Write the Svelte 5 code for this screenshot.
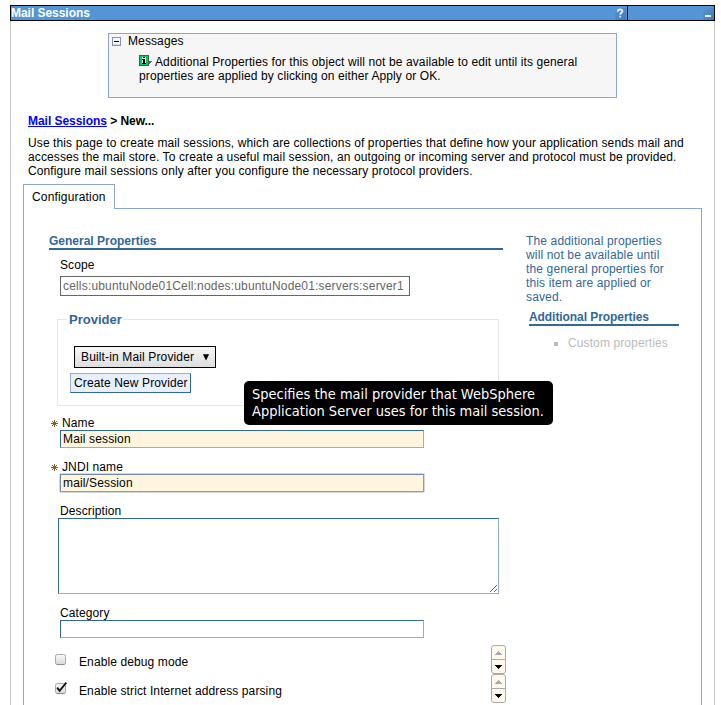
<script>
  const scope = 'cells:ubuntuNode01Cell:nodes:ubuntuNode01:servers:server1';
  let name = $state('Mail session');
  let jndi = $state('mail/Session');
  let description = $state('');
  let category = $state('');
  let options = $state([
    { label: 'Enable debug mode', checked: false },
    { label: 'Enable strict Internet address parsing', checked: true }
  ]);
</script>

{#snippet star()}
  <svg class="star" width="7" height="7" viewBox="0 0 7 7" shape-rendering="crispEdges">
    <path d="M3 0h1v7h-1z M0 3h7v1h-7z M1 1h1v1h-1z M5 1h1v1h-1z M1 5h1v1h-1z M5 5h1v1h-1z M2 2h3v3h-3z" fill="#7a681c" />
  </svg>
{/snippet}

<div class="page">
  <header>
    <h1>Mail Sessions</h1>
    <svg class="help" width="13" height="13" viewBox="0 0 13 13">
      <defs><linearGradient id="hb" x2="1" y2="1"><stop stop-color="#5a96d3" /><stop offset="1" stop-color="#3f7ab8" /></linearGradient></defs>
      <rect x="1" y="1" width="11" height="12" fill="url(#hb)" />
      <path d="M3.9 4.8V4Q4 2.5 6.1 2.5Q8.4 2.5 8.4 4.2Q8.4 5.2 7.2 5.9Q6.3 6.4 6.3 7.8M6.3 8.8V10.5" fill="none" stroke="#dfeaf7" stroke-width="1.8" />
    </svg>
    <div class="sep"></div>
    <svg class="min" width="11" height="13" viewBox="0 0 11 13">
      <rect y="1" width="11" height="12" fill="url(#hb)" />
      <rect x="2" y="8" width="6" height="2" fill="#e8f1fa" />
    </svg>
  </header>

  <main>
    <section class="messages">
      <div class="mtitle">
        <svg width="9" height="9" viewBox="0 0 9 9" shape-rendering="crispEdges">
          <rect x=".5" y=".5" width="8" height="8" fill="#f6f8fb" stroke="#8395ae" />
          <path d="M2 4h5v1h-5z" fill="#000" />
          <path d="M1 7h7v1h-7z" fill="#d3d9e1" />
        </svg>
        <span>Messages</span>
      </div>
      <p>
        <svg width="13" height="11" viewBox="0 0 13 11" shape-rendering="crispEdges">
          <path d="M10 6h3v1h-1v1h-1v1h-1z" fill="#666" />
          <rect width="10" height="11" fill="#3e5c4b" />
          <rect x="1" y="1" width="8" height="9" fill="#0bc863" />
          <path d="M3 2h4v7h-4z" fill="#e9fff1" />
          <path d="M4 2h2v1h-2z M3 4h3v4h1v1h-4v-1h1v-3h-1z" fill="#000" />
        </svg>Additional Properties for this object will not be available to edit until its general<br />properties are applied by clicking on either Apply or OK.
      </p>
    </section>

    <nav><a href="#sessions">Mail Sessions</a> &gt; New...</nav>
    <p class="intro">
      Use this page to create mail sessions, which are collections of properties that define how your application sends mail and<br />
      accesses the mail store. To create a useful mail session, an outgoing or incoming server and protocol must be provided.<br />
      Configure mail sessions only after you configure the necessary protocol providers.
    </p>

    <div class="tabs"><div class="tab">Configuration</div><div class="rest"></div></div>
    <div class="panel">
      <section class="general">
        <h2>General Properties</h2>
        <div class="field scope">
          <label for="scope">Scope</label>
          <input id="scope" value={scope} readonly />
        </div>

        <div class="provider">
          <div class="legend">Provider</div>
          <div class="select">
            <span>Built-in Mail Provider</span>
            <svg width="8" height="7" viewBox="0 0 8 7"><path d="M.9 .3H7.1L4 6.6Z" /></svg>
          </div>
          <button>Create New Provider</button>
          <div class="tooltip">Specifies the mail provider that WebSphere<br />Application Server uses for this mail session.</div>
        </div>

        <div class="field req">
          <label for="name">{@render star()}Name</label>
          <input id="name" bind:value={name} />
        </div>
        <div class="field req focus">
          <label for="jndi">{@render star()}JNDI name</label>
          <input id="jndi" bind:value={jndi} />
        </div>
        <div class="field desc">
          <label for="desc">Description</label>
          <textarea id="desc" bind:value={description}></textarea>
        </div>
        <div class="field">
          <label for="cat">Category</label>
          <input id="cat" bind:value={category} />
        </div>

        <div class="options">
          {#each options as option}
            <div class="option">
              <button class="check" aria-label={option.label} onclick={() => (option.checked = !option.checked)}>
                <svg width="13" height="13" viewBox="0 0 13 13">
                  <defs><linearGradient id="box" x2="0" y2="1"><stop stop-color="#fafafa" /><stop offset="1" stop-color="#d8d8d8" /></linearGradient></defs>
                  <rect x=".5" y="1.5" width="10" height="10" rx="1.8" fill="url(#box)" stroke="#a9a9a9" />
                  <path d="M2 11.6H9.5" stroke="#8e8e8e" />
                  {#if option.checked}<path d="M2.2 5.6L4.6 8.8L11.3 .6" fill="none" stroke="#111" stroke-width="1.8" />{/if}
                </svg>
              </button>
              <span>{option.label}</span>
              <svg class="spin" width="15" height="29" viewBox="0 0 15 29">
                <rect x=".5" y=".5" width="14" height="28" rx="2.5" fill="#fff8ec" stroke="#aaa" />
                <path d="M1 14.5H14" stroke="#aaa" />
                <path d="M7 6h1v1h1v1h1v1h1v1h-7v-1h1v-1h1v-1h1z" fill="#aaa" shape-rendering="crispEdges" />
                <path d="M4 20h7v1h-1v1h-1v1h-1v1h-1v-1h-1v-1h-1v-1h-1z" shape-rendering="crispEdges" />
              </svg>
            </div>
          {/each}
        </div>
      </section>

      <aside>
        <p>The additional properties<br />will not be available until<br />the general properties for<br />this item are applied or<br />saved.</p>
        <h2>Additional Properties</h2>
        <ul><li><i></i>Custom properties</li></ul>
      </aside>
    </div>
  </main>
</div>

<style>
  :global(body) { background: #fff; overflow: hidden; }
  * { box-sizing: border-box; margin: 0; padding: 0; }
  .page {
    width: 705px;
    height: 705px;
    margin-left: 10px;
    padding-top: 5px;
    overflow: hidden;
    font: 12px/14px "Liberation Sans", Arial, sans-serif;
    letter-spacing: .11px;
    color: #000;
  }
  header {
    display: flex;
    align-items: center;
    height: 16px;
    background: #5495d5;
    border: 1px solid #000;
  }
  h1 { flex: 1; font-size: 12px; line-height: 14px; letter-spacing: -.04px; color: #fff; }
  .sep { width: 1px; height: 14px; margin-right: 75px; background: #000; }
  .min { align-self: flex-end; }
  main { height: 700px; border: solid #c8c8c8; border-width: 0 1px; padding: 12px 12px 0; }
  .messages {
    width: 509px;
    height: 65px;
    margin-left: 85px;
    background: #f6f6f6;
    border: 1px solid #8aa4d6;
  }
  .mtitle { display: flex; align-items: center; gap: 7px; height: 14px; padding-left: 3px; }
  .mtitle svg { position: relative; top: .5px; }
  .messages p { padding: 7px 0 0 30px; white-space: nowrap; }
  .messages p svg { margin-right: 3px; vertical-align: 0; }
  nav { margin: 16px 0 0 5px; font-weight: bold; letter-spacing: -.04px; }
  nav a { color: #00f; }
  .intro { margin: 8px 0 0 5px; white-space: nowrap; }
  .tabs { display: flex; height: 25px; margin-top: 6px; }
  .tab { width: 92px; padding: 5px 0 0 8px; border: 1px solid #8aa4d6; border-bottom: 0; letter-spacing: .17px; }
  .rest { flex: 1; border-bottom: 1px solid #8aa4d6; }
  .panel {
    display: flex;
    gap: 23px;
    height: 500px;
    border: solid #8aa4d6;
    border-width: 0 1px;
    padding: 25px 0 0 25px;
  }
  .general { width: 454px; flex: none; }
  h2 { height: 16px; font-size: 12px; line-height: 14px; letter-spacing: 0; color: #369; border-bottom: 2px solid #369; }
  aside h2 { letter-spacing: -.07px; }
  .field { margin: 12px 0 0 11px; }
  label { display: block; height: 14px; }
  input {
    display: block;
    width: 364px;
    height: 18px;
    padding: 0 2px;
    border: 1px solid;
    border-color: #369 #8fb0d3 #8fb0d3 #369;
    font: 12px/14px "Liberation Sans", Arial, sans-serif;
    letter-spacing: .14px;
    background: #fff;
    color: #000;
    outline: 0;
  }
  .scope { margin-top: 8px; }
  .scope input { width: 350px; height: 20px; margin-top: 4px; border-color: #666; color: #666; letter-spacing: .175px; }
  .provider {
    position: relative;
    width: 442px;
    height: 87px;
    margin: 23px 0 10px 8px;
    border: 1px solid #e5e5e5;
  }
  .legend {
    width: 57px;
    height: 16px;
    margin: -8px 0 0 9px;
    padding-left: 2px;
    background: #fff;
    font-size: 13px;
    line-height: 16px;
    letter-spacing: 0;
    font-weight: bold;
    color: #369;
  }
  .select {
    display: flex;
    align-items: center;
    justify-content: space-between;
    width: 142px;
    height: 22px;
    margin: 18px 0 5px 16px;
    padding: 0 5px 0 6px;
    border: 1px solid #000;
    background: linear-gradient(#f6f6f6, #dedede);
    letter-spacing: .14px;
  }
  .provider button {
    display: block;
    width: 121px;
    height: 20px;
    margin-left: 12px;
    padding-left: 3px;
    border: 1px solid;
    border-color: #8fb0d3 #369 #369 #8fb0d3;
    background: #e8f0ff;
    font: 12px/14px "Liberation Sans", Arial, sans-serif;
    letter-spacing: .12px;
    text-align: left;
    color: #000;
    white-space: nowrap;
  }
  .tooltip {
    position: absolute;
    left: 186px;
    top: 61px;
    z-index: 1;
    width: 309px;
    height: 44px;
    padding: 5px 8px;
    border-radius: 5px;
    background: #000;
    color: #fff;
    font: 14.47px/17px "DejaVu Sans Condensed", "DejaVu Sans", sans-serif;
    font-stretch: condensed;
    letter-spacing: normal;
    white-space: nowrap;
  }
  .req label { display: flex; align-items: center; gap: 4px; margin-left: -9px; }
  .star { position: relative; top: .5px; }
  .req input { background: #fff5de; }
  .provider + .req { margin-top: 0; }
  .focus input { border-color: #6f8ba5 #8f9ba8 #8f9ba8 #6f8ba5; box-shadow: 0 0 0 1px #d3d8da; border-radius: 1px; }
  textarea {
    display: block;
    width: 441px;
    height: 76px;
    margin-left: -2px;
    border: 1px solid;
    border-color: #369 #8fb0d3 #8fb0d3 #369;
    background: #fff;
    outline: 0;
  }
  .options { padding: 7px 0 0 6px; }
  .option { display: flex; height: 29px; }
  .option span { margin: 10px 0 0 11px; flex: 1; }
  .check { width: 13px; height: 13px; margin-top: 8px; border: 0; background: none; }
  .check svg { display: block; }
  .spin { margin-right: -3px; }
  aside { width: 153px; color: #369; }
  aside p { white-space: nowrap; letter-spacing: .15px; }
  aside h2 { width: 150px; margin: 6px 0 0 3px; }
  ul { list-style: none; margin: 10px 0 0 28px; }
  li { display: flex; align-items: center; gap: 10px; color: #bbb; white-space: nowrap; }
  i { width: 4px; height: 4px; background: #bbb; position: relative; top: 1px; }
</style>
